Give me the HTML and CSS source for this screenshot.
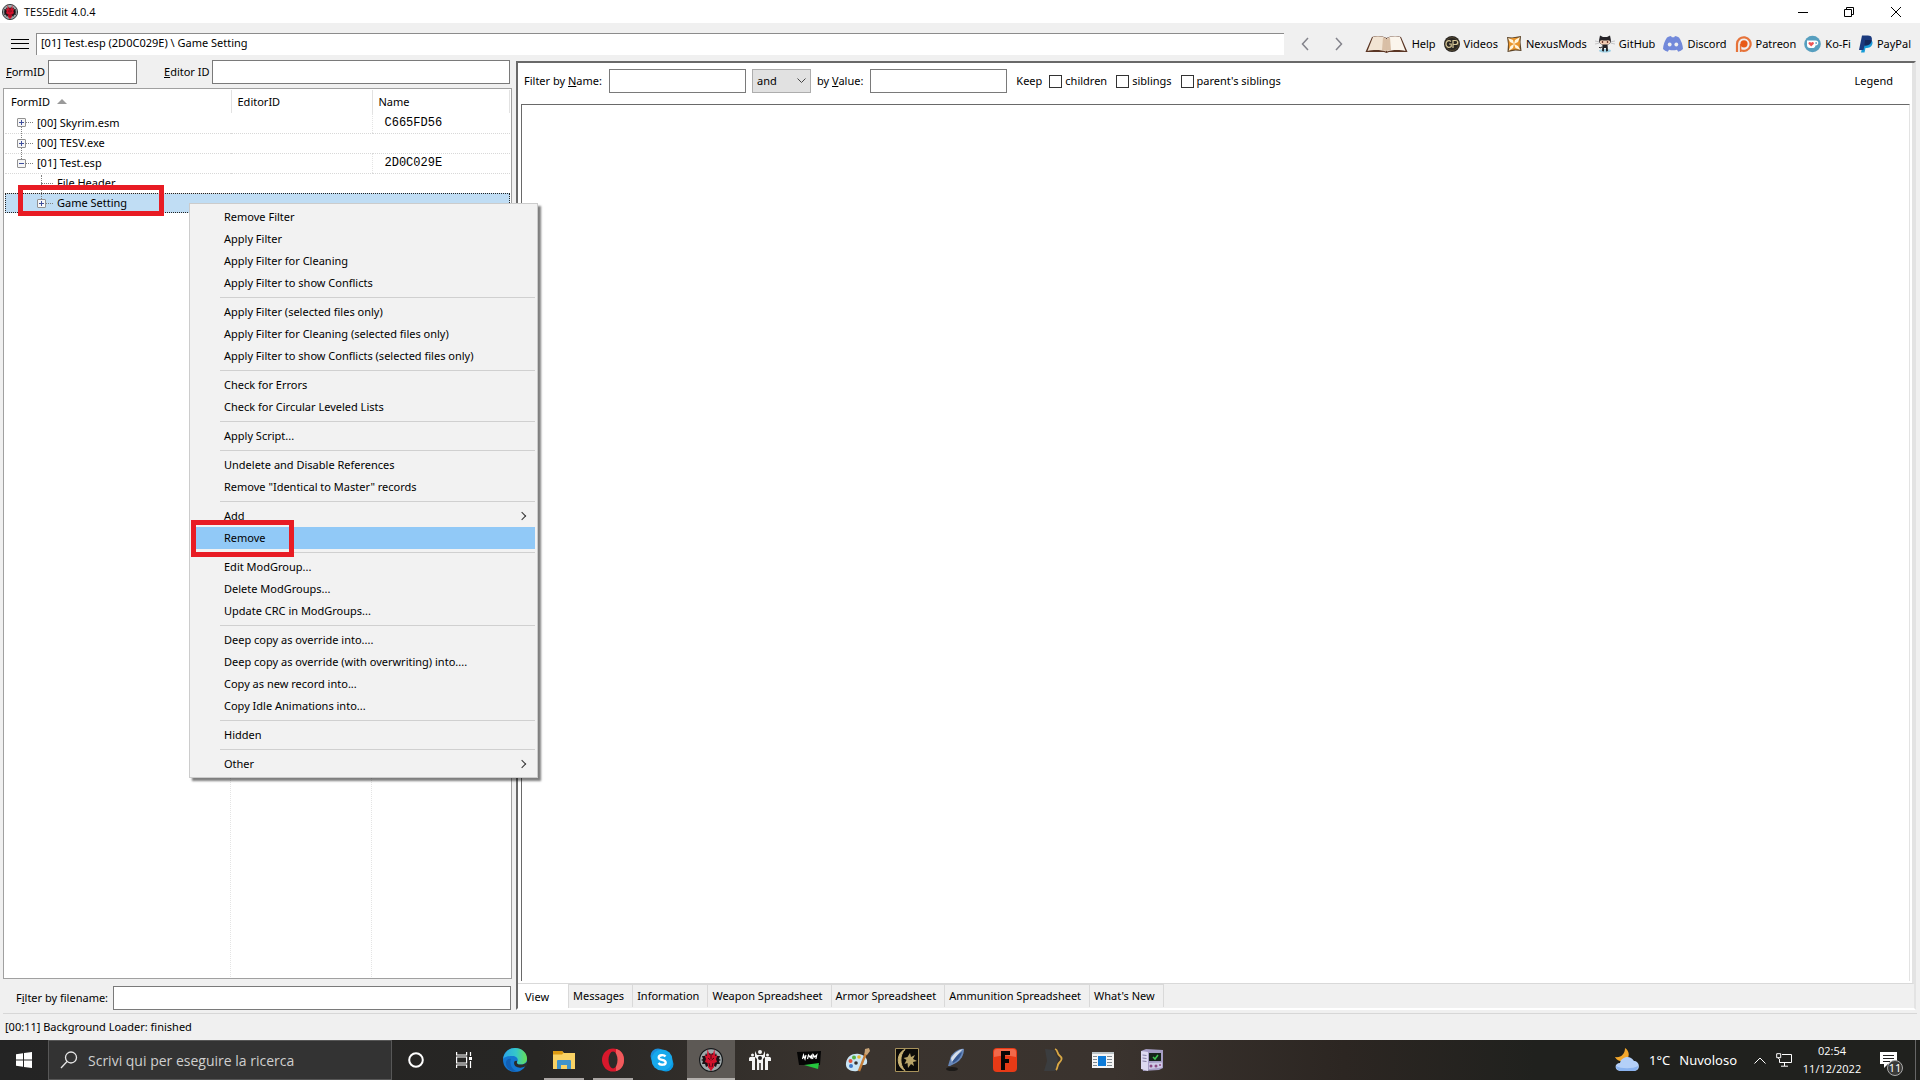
FILE: index.html
```
<!DOCTYPE html>
<html lang="it">
<head>
<meta charset="utf-8">
<title>TES5Edit 4.0.4</title>
<link rel="stylesheet" href="styles.css">
</head>
<body>
<svg class="defs" aria-hidden="true">
  <symbol id="daedra" viewBox="0 0 24 24">
    <circle cx="12" cy="12" r="11.4" fill="#9fa9ab" stroke="#15181a" stroke-width="1.2"/>
    <path d="M7 5l1 2 2-2 2 1 2-1 2 2 1-2 1 3 3 0-1 3 2 1-2 1 1 3-3 0-1 3-2-1-1 2h-4l-1-2-2 1-1-3-3 0 1-3-2-1 2-1-1-3 3 0z" fill="#1b1216"/>
    <path d="M8.500 1l2 6 1.500-1.500L13.500 7l2-6 .5 7 2.500-1-1.500 4 1 3-2.500 1-.5 4-3 4-3-4-.5-4-2.500-1 1-3-1.500-4 2.500 1z" fill="#d3122c"/>
    <path d="M9 10l2.400 2M15 10l-2.400 2M10 15l1 4M14 15l-1 4M12 6v5" stroke="#4c0713" stroke-width="1"/>
  </symbol>
</svg>

<header class="titlebar">
  <svg class="app-icon"><use href="#daedra"/></svg>
  <h1>TES5Edit 4.0.4</h1>
  <div class="window-buttons">
    <button aria-label="Minimize"><svg width="12" height="12" viewBox="0 0 12 12"><path d="M1 6.500h10"/></svg></button>
    <button aria-label="Restore"><svg width="12" height="12" viewBox="0 0 12 12"><path d="M1.500 3.500h7v7h-7zM3.500 3.500v-2h7v7h-2"/></svg></button>
    <button aria-label="Close"><svg width="12" height="12" viewBox="0 0 12 12"><path d="M1 1l10 10M11 1L1 11"/></svg></button>
  </div>
</header>

<div class="toolbar">
  <button class="burger" aria-label="Menu"><svg width="18" height="12" viewBox="0 0 18 12"><path d="M0 1.500h18M0 5.500h18M0 10.500h18"/></svg></button>
  <input class="address" aria-label="Path" value="[01] Test.esp (2D0C029E) \ Game Setting" readonly>
  <div class="history">
    <button aria-label="Back"><svg width="8" height="14" viewBox="0 0 8 14"><path d="M7 1L1.500 7 7 13"/></svg></button>
    <button aria-label="Forward"><svg width="8" height="14" viewBox="0 0 8 14"><path d="M1 1l5.500 6L1 13"/></svg></button>
  </div>
  <nav class="links">
    <a href="#help"><svg width="43" height="18" viewBox="0 0 43 18"><path d="M7 2C12 0 18 1 21.500 3 25 1 31 0 36 2l6.500 15H24l-2.500 1-2.500-1H.5z" fill="#5a3524"/><path d="M8 2c5-1.500 10-.5 13 1.500V16.500c-5-2-13-2-18.500-.5z" fill="#f2e4d3"/><path d="M35 2c-5-1.500-10-.5-13 1.500V16.500c5-2 13-2 18.500-.5z" fill="#fbf5ec"/><path d="M18 2.500l3.500 1.500v12l-4.500-1zM25 2.500L21.500 4v12l4.500-1z" fill="#d9bfa6"/></svg>Help</a>
    <a href="#videos"><svg width="16" height="18" viewBox="0 0 16 18"><circle cx="8" cy="9" r="8" fill="#2a2621"/><circle cx="8" cy="9" r="6.500" fill="none" stroke="#6a5a3c" stroke-width=".6"/><path d="M7 6.500C5 4.500 2 6 2 9s3 4.500 5.200 2.500V9H5M9 13V5.500h2.500c3 0 3 4 0 4H9" fill="none" stroke="#d8c898" stroke-width="1.200"/></svg>Videos</a>
    <a href="#nexus"><svg width="16" height="18" viewBox="0 0 16 18"><path d="M1 2l5 .5L15 1l-.5 6 1 9-6-.5-8 1.500L2 9z" fill="#5c4326"/><path d="M2.500 3.500L8 3l5.500-.5.5 6-.5 6-5.500 0-5 1z" fill="#e9952c"/><path d="M2 3l5 2 1 4L4 7zM14 2l-2 5-4 2 1-4zM14.500 15l-5-2L8 9l4 2zM2.500 16l2-5L8 9l-1 4z" fill="#fff6df"/></svg>NexusMods</a>
    <a href="#github"><svg width="20" height="18" viewBox="0 0 20 18"><ellipse cx="10" cy="15.800" rx="6" ry="1.800" fill="#9fd0e4"/><path d="M5 .5l3 1.500h4L15 .5l.8 4c.8 4-2 5.500-5.800 5.500S3.400 8.500 4.200 4.500zM7.500 9h5l.5 7-2 .5V13H9v3.500l-2-.5z" fill="#252327"/><path d="M5 6c1-1.500 3-.6 5-.6s4-.9 5 .6c.8 3-2 3.500-5 3.500S4.200 9 5 6z" fill="#f2cdb4"/><path d="M7.500 6v2M12.500 6v2" stroke="#6d3b30" stroke-width="1.300"/><path d="M0 6l4 .8M0 9l4-.8M20 6l-4 .8M20 9l-4-.8" stroke="#a9a9ac" stroke-width=".6"/><path d="M7 12l-2 1-1-1" fill="none" stroke="#252327"/></svg>GitHub</a>
    <a href="#discord"><svg width="20" height="18" viewBox="0 0 20 18"><path d="M4 2.500Q6 1.300 8 1l.8 1.300h2.400L12 1q2 .3 4 1.500 3.500 5 4 11.500-2 2-4.800 2.700l-1.200-2q-4 1-8 0l-1.200 2Q2 16 0 14 .5 7.500 4 2.500z" fill="#7289da"/><ellipse cx="6.700" cy="9.500" rx="1.900" ry="2.100" fill="#f0f0f0"/><ellipse cx="13.300" cy="9.500" rx="1.900" ry="2.100" fill="#f0f0f0"/></svg>Discord</a>
    <a href="#patreon"><svg width="17" height="18" viewBox="0 0 17 18"><path d="M2 17V9a6.800 6.800 0 1 1 4 6.300" fill="none" stroke="#e6733a" stroke-width="2.200"/><path d="M5.600 17V9" stroke="#e6733a" stroke-width="1.500"/><circle cx="9" cy="8.800" r="3.600" fill="#e85b17"/></svg>Patreon</a>
    <a href="#kofi"><svg width="17" height="18" viewBox="0 0 17 18"><circle cx="8.500" cy="9" r="8.300" fill="#579fbf"/><path d="M3 5.500h8.500c4 0 3.500 5 0 5-.5 2-1.500 2.500-3 2.500H6c-2 0-3-1-3-3z" fill="#fff"/><path d="M11.500 7v2.200c2 0 2-2.200 0-2.200z" fill="#579fbf"/><path d="M7.200 11.500L4.700 9c-1-1.500 1.200-3 2.500-1.200C8.500 6 10.700 7.500 9.700 9z" fill="#ee5555"/></svg>Ko-Fi</a>
    <a href="#paypal"><svg width="14" height="18" viewBox="0 0 14 18"><path d="M5 5h7c3 1.500 1.500 8-4 8H6.500l-1 4.500H2z" fill="#179bd7"/><path d="M3 .5h6c4 0 4.500 3 3.500 6C11.500 10 9 10.500 5.500 10.500L4.500 15H0z" fill="#1b3a7e"/><path d="M6 5h6.500C12 9 9.500 10.500 5.500 10.500z" fill="#14285c"/></svg>PayPal</a>
  </nav>
</div>

<main class="workspace">
  <section class="browser">
    <div class="id-search">
      <label for="formid"><u>F</u>ormID</label>
      <input id="formid" class="box formid">
      <label for="editorid" class="second"><u>E</u>ditor ID</label>
      <input id="editorid" class="box grow">
    </div>
    <div class="tree">
      <table>
        <colgroup><col class="col-form"><col class="col-editor"><col></colgroup>
        <thead>
          <tr><th>FormID <span class="sort"></span></th><th>EditorID</th><th>Name</th></tr>
        </thead>
        <tbody>
          <tr><td><span class="node"><button class="toggle plus stem" aria-label="Expand"></button><i class="twig"></i>[00] Skyrim.esm</span></td><td></td><td class="crc">C665FD56</td></tr>
          <tr><td><span class="node"><button class="toggle plus stem" aria-label="Expand"></button><i class="twig"></i>[00] TESV.exe</span></td><td></td><td></td></tr>
          <tr><td><span class="node"><button class="toggle" aria-label="Collapse"></button><i class="twig"></i>[01] Test.esp</span></td><td></td><td class="crc">2D0C029E</td></tr>
          <tr><td><span class="node child leaf"><i class="twig stem"></i>File Header</span></td><td></td><td></td></tr>
          <tr class="selected"><td><span class="node child"><button class="toggle plus" aria-label="Expand"></button><i class="twig"></i>Game Setting</span></td><td></td><td></td></tr>
        </tbody>
      </table>
      <div class="tree-rest"><i></i><i></i></div>
    </div>
    <div class="file-filter">
      <label for="filename">F<u>i</u>lter by filename:</label>
      <input id="filename" class="box grow">
    </div>
  </section>

  <section class="details">
    <div class="page">
      <form class="filters">
        <label for="byname">Filter by <u>N</u>ame:</label>
        <input id="byname" class="box value">
        <span class="select-wrap"><select aria-label="Operator"><option>and</option></select><svg width="9" height="6" viewBox="0 0 9 6"><path d="M.5 .5l4 4 4-4"/></svg></span>
        <label for="byvalue">by <u>V</u>alue:</label>
        <input id="byvalue" class="box value">
        <span class="keep">Keep</span>
        <label class="check"><input type="checkbox">children</label>
        <label class="check"><input type="checkbox">siblings</label>
        <label class="check"><input type="checkbox">parent's siblings</label>
        <a class="legend" href="#legend">Legend</a>
      </form>
      <div class="record-view"></div>
    </div>
    <div class="tabs" role="tablist">
      <button role="tab" class="active">View</button>
      <button role="tab">Messages</button>
      <button role="tab">Information</button>
      <button role="tab">Weapon Spreadsheet</button>
      <button role="tab">Armor Spreadsheet</button>
      <button role="tab">Ammunition Spreadsheet</button>
      <button role="tab">What's New</button>
    </div>
  </section>
</main>

<div class="status">[00:11] Background Loader: finished</div>

<footer class="taskbar">
  <button class="start" aria-label="Start"><svg width="16" height="16" viewBox="0 0 16 16"><path d="M0 2.200L7 1.200V7.500H0zM8 1L16 0v7.500H8zM0 8.500h7v6.300l-7-1zM8 8.500h8V16l-8-1.100z" fill="#fff"/></svg></button>
  <label class="search">
    <svg width="18" height="18" viewBox="0 0 18 18"><circle cx="11" cy="6.500" r="5.500"/><path d="M7 10.500L1 17"/></svg>
    <input type="text" placeholder="Scrivi qui per eseguire la ricerca" aria-label="Cerca">
  </label>
  <button class="task" aria-label="Cortana"><svg width="16" height="18" viewBox="0 0 16 18"><circle cx="8" cy="9" r="6.800" fill="none" stroke="#fff" stroke-width="2"/></svg></button>
  <button class="task" aria-label="Task view"><svg width="16" height="16" viewBox="0 0 16 16" fill="none" stroke="#fff" stroke-width="1.200"><path d="M.6 0v3h10V0M.6 16v-3h10v3M.6 5h10v6H.6zM14.500 0v4M14.500 9v7"/><path d="M13 5h3v3h-3z" fill="#fff" stroke="none"/></svg></button>
  <div class="apps">
    <button class="task" aria-label="Edge"><svg width="24" height="24" viewBox="0 0 24 24"><defs><linearGradient id="eg" x1="0" x2="1"><stop offset="0" stop-color="#2ba5e8"/><stop offset=".55" stop-color="#35c7c9"/><stop offset="1" stop-color="#67e052"/></linearGradient></defs><circle cx="12" cy="12" r="12" fill="#1477d1"/><path d="M0 11C1 4 6 0 12 0c7 0 12 5 12 10.500 0 4-3 6-6.500 6-3 0-4-1.300-3.300-2.500 1.800-3-.7-6-4.700-6C5 8 1.500 9 0 11z" fill="url(#eg)"/><path d="M8 11c-2 5 1 11 7 12.500C9 25 2 20 3 14c.5-2 2.500-4 5-3z" fill="#1160b5"/><path d="M14 14c-.7 1.500.5 2.600 3.500 2.600 2.500 0 4.500-.8 6.500-2.600v4l-2 .5c-2 1-4 1.500-6 1-4-.5-5.500-3-4.700-6 1.500-1 3-.9 2.700.5z" fill="#2b2b2a"/></svg></button>
    <button class="task open" aria-label="File Explorer"><svg width="22" height="20" viewBox="0 0 22 20"><path d="M0 1h9l2 2h11v16H0z" fill="#f9d264"/><path d="M0 1h9l1.500 2L9 4.500H0z" fill="#dc9a12"/><path d="M4 19v-8q0-1 1-1h12q1 0 1 1v8h-4v-4H8v4z" fill="#3f93cc"/></svg></button>
    <button class="task open" aria-label="Opera"><svg width="22" height="24" viewBox="0 0 22 24"><ellipse cx="11" cy="12" rx="11" ry="11.500" fill="#d8182c"/><path d="M14 1c5 1 8 5.500 8 11s-3 10-8 11z" fill="#ef5a5c"/><ellipse cx="11" cy="12" rx="4.500" ry="8.500" fill="#2c2a28"/></svg></button>
    <button class="task" aria-label="Skype"><svg width="24" height="24" viewBox="0 0 24 24"><circle cx="8" cy="8" r="7.500" fill="#1b8fdb"/><circle cx="16" cy="16" r="7.500" fill="#0a9be6"/><circle cx="12" cy="12" r="10.500" fill="#17a9ec"/><path d="M15.500 8.500C14 6.500 8.700 6.800 8.700 9.500c0 3.200 7 1.700 7 4.900 0 3-5.500 3-7.200.6" fill="none" stroke="#fff" stroke-width="2.300"/></svg></button>
    <button class="task open current" aria-label="TES5Edit"><svg width="24" height="24"><use href="#daedra"/></svg></button>
    <button class="task" aria-label="Mod tool"><svg width="22" height="22" viewBox="0 0 22 22" fill="#f4f4f4"><circle cx="3.500" cy="6" r="1.500"/><circle cx="11" cy="3" r="2"/><circle cx="18.500" cy="6" r="1.500"/><path d="M1 8h5v13H3v-9H0V9zM6 2l2 4h6l2-4v6l-2 2v11h-2.200v-7h-1.600v7H8V10L6 8zM16 8h5l1 1v3h-3v9h-3z"/><circle cx="11" cy="9" r="2" fill="#222"/></svg></button>
    <button class="task" aria-label="Mod manager"><svg width="24" height="20" viewBox="0 0 24 20"><path d="M0 2l24-1-1 14H2z" fill="#050505"/><path d="M7 15l15-2-1 6z" fill="#25c53e"/><path d="M5.500 9l1-4 1.500 4 1-4M10.500 9l1-4 1.500 2 2-2-1 4M15.500 9l1-4 1.200 2 2-2-.8 4" fill="none" stroke="#fff" stroke-width="1.200"/></svg></button>
    <button class="task" aria-label="Paint"><svg width="26" height="24" viewBox="0 0 26 24"><path d="M1 15C2 8 8 5 14 6c6 1 9 5 8 9-1 3-4 1-6 3s0 4-4 5C6 24 0 21 1 15z" fill="#c9e5f5"/><circle cx="5.500" cy="13" r="2" fill="#e2553c"/><circle cx="9" cy="9.500" r="2" fill="#57b244"/><circle cx="14" cy="9" r="1.800" fill="#e7b733"/><circle cx="6" cy="18" r="2" fill="#3b78c8"/><circle cx="11" cy="15" r="1.800" fill="#35322e"/><path d="M21 5L14 23" stroke="#c57d37" stroke-width="2.400"/><path d="M19.500 6L20 1l4-1 1 3-3 4z" fill="#c9a477"/></svg></button>
    <button class="task" aria-label="Creation Kit"><svg width="24" height="24" viewBox="0 0 24 24"><path d="M.5 .5h23v23H.5z" fill="#0c0b08" stroke="#a8935c"/><path d="M10 1.500C1 5 1 19 10 22.500 4.500 17 4.500 7 10 1.500z" fill="#c9b375" stroke="#c9b375"/><path d="M15 5l1 4 4-2-2 4 4 2-4 1 1 4-3-2-3 4-.5-5-3 1 2-4-3-2 4-1z" fill="#b8a468"/></svg></button>
    <button class="task" aria-label="Editor"><svg width="20" height="24" viewBox="0 0 20 24"><ellipse cx="6" cy="21" rx="6" ry="2" fill="#1c1a18"/><path d="M2 18L5 8C9 3 14 0 18 1c0 6-3 11-8 14l-6 3z" fill="#6686b8"/><path d="M5 10c4-6 8-8 12-9-3 3-7 7-11 14z" fill="#d5deea"/><path d="M6 14C9 10 12 6 16 4c-1 5-5 9-9 11z" fill="#35568f"/></svg></button>
    <button class="task" aria-label="FOMOD"><svg width="24" height="24" viewBox="0 0 24 24"><rect width="24" height="24" rx="4" fill="#e83a16"/><path d="M1 4q0-3 3-3h16q3 0 3 3v5q-11-3-22 0z" fill="#f2694a"/><path d="M8 3h9v4h-5v4h4v4h-4v7H8z" fill="#0a0606"/></svg></button>
    <button class="task" aria-label="Archive"><svg width="20" height="24" viewBox="0 0 20 24"><path d="M1 1l9 1 4 9-3 12H0l3-10z" fill="#3b3d3f"/><path d="M11 1c3 1 2 4 4 6 4 3 3 5 0 8-2 2-1 5-3 7" fill="none" stroke="#d9a945" stroke-width="1.800"/></svg></button>
    <button class="task" aria-label="Reader"><svg width="22" height="16" viewBox="0 0 22 16"><path d="M0 0h22v16H0z" fill="#f5f5f5"/><path d="M0 0h22v2H0z" fill="#bcc4c8"/><path d="M6 4h8v10H6z" fill="#0d7bd8"/><path d="M1 4.500h4M1 7.500h4M1 10.500h4M1 13.500h4M15 4.500h5M15 7.500h5M15 10.500h5M15 13.500h5" stroke="#808a90"/></svg></button>
    <button class="task" aria-label="Monitor"><svg width="24" height="24" viewBox="0 0 24 24"><path d="M1 3l5-2 17 1v18l-4 2-16 1z" fill="#a59dc4"/><path d="M1 3l7 1v19l-7-2z" fill="#dddaf0"/><path d="M2.500 7l4 .5M2.500 10l4 .5M2.500 13l4 .5" stroke="#8680a5"/><path d="M9 5h12v8H9z" fill="#16231a"/><path d="M13 9l2 2 3-4" fill="none" stroke="#42c552" stroke-width="1.500"/><path d="M9 15l13-.5v5L9 21z" fill="#cfc9e6"/><circle cx="11" cy="18" r="1.500" fill="#8a4a83"/><circle cx="16" cy="18" r="1.500" fill="#8a4a83"/><circle cx="20" cy="17" r="1" fill="#8a4a83"/></svg></button>
  </div>
  <div class="tray">
    <button class="weather"><svg width="25" height="24" viewBox="0 0 25 24"><path d="M10 0c5 3 5 10 0 13-4 1-8 0-10-4 6 1 10-3 10-9z" fill="#f2a72c"/><path d="M6 23c-7 0-7-8-1-8 1-6 10-9 14-2 6 0 7 10 0 10z" fill="#b4d0f8"/><path d="M1 18c5 3 17 3 22 0 0 3-2 5-5 5H6c-2 0-5-2-5-5z" fill="#8ab3ef"/></svg><span>1°C</span><span>Nuvoloso</span></button>
    <button aria-label="Hidden icons"><svg width="12" height="7" viewBox="0 0 12 7"><path d="M.5 6.500L6 1l5.500 5.500"/></svg></button>
    <button aria-label="Network"><svg width="16" height="14" viewBox="0 0 16 14"><path d="M6 1.500h9.500v8H3.500V6M8.500 9.500v3.500M5 13.200h7M.7 .7h4v4h-4zM2.700 4.700V6"/></svg></button>
    <time><span>02:54</span><span>11/12/2022</span></time>
    <button class="notify" aria-label="Notifications"><svg width="17" height="16" viewBox="0 0 17 16"><path d="M0 0h17v12H8l-4 4v-4H0z" fill="#fff" stroke="none"/><path d="M3 3.500h11M3 6.500h11M3 9.500h7" stroke="#222"/></svg><span class="badge">11</span></button>
  </div>
</footer>

<div class="context-menu" role="menu">
  <button role="menuitem">Remove Filter</button>
  <button role="menuitem">Apply Filter</button>
  <button role="menuitem">Apply Filter for Cleaning</button>
  <button role="menuitem">Apply Filter to show Conflicts</button>
  <hr>
  <button role="menuitem">Apply Filter (selected files only)</button>
  <button role="menuitem">Apply Filter for Cleaning (selected files only)</button>
  <button role="menuitem">Apply Filter to show Conflicts (selected files only)</button>
  <hr>
  <button role="menuitem">Check for Errors</button>
  <button role="menuitem">Check for Circular Leveled Lists</button>
  <hr>
  <button role="menuitem">Apply Script...</button>
  <hr>
  <button role="menuitem">Undelete and Disable References</button>
  <button role="menuitem">Remove "Identical to Master" records</button>
  <hr>
  <button role="menuitem" class="sub">Add</button>
  <button role="menuitem" class="hot">Remove</button>
  <hr>
  <button role="menuitem">Edit ModGroup...</button>
  <button role="menuitem">Delete ModGroups...</button>
  <button role="menuitem">Update CRC in ModGroups...</button>
  <hr>
  <button role="menuitem">Deep copy as override into....</button>
  <button role="menuitem">Deep copy as override (with overwriting) into....</button>
  <button role="menuitem">Copy as new record into...</button>
  <button role="menuitem">Copy Idle Animations into...</button>
  <hr>
  <button role="menuitem">Hidden</button>
  <hr>
  <button role="menuitem" class="sub">Other</button>
</div>
<div class="mark mark-tree"></div>
<div class="mark mark-menu"></div>
</body>
</html>
```
FILE: styles.css
```
* { box-sizing: border-box; }

body {
  margin: 0;
  min-height: 100vh;
  display: flex;
  flex-direction: column;
  position: relative;
  background: #f0f0f0;
  color: #000;
  font: 11px/16px "Noto Sans", "Open Sans", sans-serif;
}

button, input, select { font: inherit; color: inherit; }
button { border: 0; padding: 0; background: none; }
a { color: inherit; text-decoration: none; }
svg { display: block; flex: none; }
label { white-space: nowrap; }
.defs { position: absolute; width: 0; height: 0; }

/* Title bar */
.titlebar {
  display: flex;
  align-items: center;
  gap: 6px;
  height: 23px;
  padding-left: 2px;
  background: #fff;
}
.app-icon { width: 16px; height: 16px; }
.titlebar h1 { margin: 0; font: 11px/16px "Open Sans", sans-serif; }
.window-buttons { margin-left: auto; display: flex; }
.window-buttons button {
  width: 46px;
  height: 22px;
  display: grid;
  place-items: center;
}
.window-buttons button:last-child { width: 48px; }
.window-buttons path { fill: none; stroke: #000; }

/* Toolbar */
.toolbar {
  display: flex;
  align-items: center;
  height: 37px;
  padding: 4px 9px 0 11px;
}
.burger { margin-right: 7px; }
.burger path { stroke: #000; stroke-width: 1; }
.address {
  flex: 1;
  min-width: 0;
  height: 22px;
  padding: 0 4px 4px;
  border: 0;
  border-top: 1px solid #8c8c8c;
  border-left: 1px solid #8c8c8c;
  background: #fff;
}
.history { display: flex; gap: 26px; padding: 0 22px 0 17px; }
.history path { fill: none; stroke: #83838b; stroke-width: 1.500; }
.links { display: flex; gap: 8px; }
.links a { display: flex; align-items: center; gap: 4px; }

/* Workspace */
.workspace { flex: 1; display: flex; padding: 0 4px 3px 3px; gap: 4px; }
.box {
  height: 24px;
  border: 1px solid #7a7a7a;
  background: #fff;
  padding: 0 4px;
  min-width: 0;
}
.grow { flex: 1; }

.browser { flex: none; width: 509px; display: flex; flex-direction: column; }
.id-search { display: flex; align-items: center; gap: 4px; padding: 0 2px 4px 3px; }
.id-search label { width: 38px; }
.id-search .second { width: 44px; margin-left: 23px; }
.formid { width: 89px; }

.tree {
  flex: 1;
  display: flex;
  flex-direction: column;
  border: 1px solid #a0a0a0;
  background: #fff;
  padding: 1px;
}
.tree table { width: 100%; table-layout: fixed; border-collapse: collapse; }
.col-form { width: 226px; }
.col-editor { width: 141px; }
.tree th {
  height: 23px;
  padding: 0 6px;
  text-align: left;
  font-weight: 400;
  border-right: 1px solid #e2e2e2;
}
.sort {
  display: inline-block;
  margin: 0 0 2px 4px;
  border: 5px solid transparent;
  border-top: 0;
  border-bottom-color: #9a9a9a;
}
.tree td {
  height: 20px;
  padding: 0 12px;
  border-bottom: 1px dotted #d8d8d8;
}
.tree .crc {
  border-left: 1px dotted #e4e4e4;
  font: 12px/16px "Liberation Mono", monospace;
}
.node { display: flex; align-items: center; white-space: nowrap; }
.child { padding-left: 20px; }
.leaf { padding-left: 24px; }
.leaf .twig { width: 12px; }
.toggle {
  flex: none;
  width: 9px;
  height: 9px;
  border: 1px solid #919191;
  border-radius: 1px;
  background: linear-gradient(#3f4f9c, #3f4f9c) center / 5px 1px no-repeat, #f6f6f6;
}
.toggle.plus {
  background:
    linear-gradient(#3f4f9c, #3f4f9c) center / 5px 1px no-repeat,
    linear-gradient(#3f4f9c, #3f4f9c) center / 1px 5px no-repeat,
    #f6f6f6;
}
.twig { width: 7px; margin-right: 4px; border-top: 1px dotted #808080; }
/* Dotted connector that drops from one branch to the next */
.stem { position: relative; }
.stem::after {
  content: "";
  position: absolute;
  left: 3px;
  top: 8px;
  height: 11px;
  border-left: 1px dotted #808080;
}
.twig.stem::after { left: 0; top: -9px; height: 24px; }
.selected { background: #c0ddf4; outline: 1px dotted #222; outline-offset: -1px; }
.tree .selected td { border-color: transparent; }
.tree-rest { flex: 1; display: flex; }
.tree-rest i { width: 226px; border-right: 1px dotted #e4e4e4; }
.tree-rest i + i { width: 141px; }

.file-filter { display: flex; align-items: center; gap: 4px; padding: 7px 1px 0 13px; }
.file-filter label { width: 93px; }

/* Details pane */
.details {
  flex: 1;
  min-width: 0;
  display: flex;
  flex-direction: column;
  margin-top: 1px;
  border: 2px solid #696969;
  border-right: 2px solid #e3e3e3;
  border-bottom: 2px solid #fff;
}
.page {
  flex: 1;
  display: flex;
  flex-direction: column;
  background: #fff;
  border-right: 2px solid #e3e3e3;
  border-bottom: 1px solid #d9d9d9;
  padding: 0 2px 2px 3px;
}
.filters { display: flex; align-items: center; height: 41px; padding: 0 17px 5px 3px; }
.filters label { flex: none; }
.value { width: 137px; margin: 0 6px 0 7px; }
.select-wrap { position: relative; margin-right: 6px; }
.select-wrap select {
  display: block;
  width: 59px;
  height: 24px;
  padding: 0 4px;
  border: 1px solid #adadad;
  border-radius: 0;
  background: #e1e1e1;
  appearance: none;
}
.select-wrap svg { position: absolute; right: 5px; top: 9px; }
.select-wrap path { fill: none; stroke: #444; }
.keep { margin: 0 7px 0 3px; }
.check { display: flex; align-items: center; gap: 3px; margin-right: 9px; }
.check input {
  appearance: none;
  width: 13px;
  height: 13px;
  margin: 0;
  border: 1px solid #333;
  background: #fff;
}
.legend { margin-left: auto; }
.record-view {
  flex: 1;
  border-top: 1px solid #696969;
  border-left: 1px solid #696969;
  border-right: 1px solid #e3e3e3;
}

.tabs { display: flex; height: 24px; }
.tabs button { padding: 0 8px 0 4px; height: 23px; border-right: 1px solid #d9d9d9; border-top: 1px solid #d9d9d9; }
.tabs .active { width: 51px; height: 24px; padding: 2px 0 0 7px; text-align: left; border-top: 0; background: #fff; }

.status {
  height: 27px;
  margin: 0 3px;
  padding: 5px 2px;
  border-top: 1px solid #d7d7d7;
}

/* Taskbar */
.taskbar {
  display: flex;
  height: 40px;
  color: #fff;
  background: linear-gradient(90deg, #242424, #272624 28%, #3a342f 44%, #3a332e 58%, #2c2622 70%, #20211e 80%);
}
.taskbar button { display: flex; align-items: center; justify-content: center; }
.start { width: 48px; }
.search {
  width: 344px;
  display: flex;
  align-items: center;
  gap: 10px;
  padding: 0 11px;
  border: 1px solid #575757;
  background: #333;
  font: 14px/20px "Open Sans", sans-serif;
}
.search svg { fill: none; stroke: #e6e6e6; stroke-width: 1.300; }
.search input { flex: 1; min-width: 0; padding: 2px 0 0; border: 0; background: none; outline: 0; }
.search input::placeholder { color: #cfcfcf; opacity: 1; }
.task { width: 48px; border: solid transparent; border-width: 2px 0; }
.apps { display: flex; gap: 1px; margin-left: 3px; }
.taskbar .open { background: linear-gradient(#aaa6a4, #aaa6a4) center bottom / 40px 2px no-repeat border-box; }
.taskbar .current { background: linear-gradient(#b4b1ae, #b4b1ae) center bottom / 48px 2px no-repeat border-box, #5d5955 border-box; }
.tray { margin-left: auto; display: flex; align-items: center; margin-right: 4px; padding-right: 18px; border-right: 1px solid #666; }
.tray svg { fill: none; stroke: #fff; }
.tray .weather { gap: 9px; margin-right: 17px; font-size: 13px; }
.tray .weather svg { stroke: none; }
.tray time { display: flex; flex-direction: column; align-items: center; width: 60px; margin: 0 18px 0 0; font-family: "Open Sans", sans-serif; line-height: 18px; }
.tray button + button { margin-right: 10px; }
.tray .notify { position: relative; margin: 0; }
.badge {
  position: absolute;
  left: 7px;
  top: 8px;
  width: 16px;
  height: 16px;
  border: 1px solid #aaa;
  border-radius: 50%;
  background: #3a3a38;
  line-height: 14px;
  text-align: center;
}

/* Context menu */
.context-menu {
  position: absolute;
  left: 189px;
  top: 203px;
  width: 349px;
  padding: 2px;
  border: 1px solid #ccc;
  background: #f2f2f2;
  box-shadow: 3px 3px 2px rgba(0, 0, 0, .5);
}
.context-menu button {
  display: flex;
  align-items: center;
  justify-content: space-between;
  width: 100%;
  height: 22px;
  padding: 0 10px 0 32px;
}
.context-menu hr { height: 1px; margin: 3px 0 3px 28px; border: 0; background: #d0d0d0; }
.sub::after {
  content: "";
  width: 5px;
  height: 5px;
  border: solid #333;
  border-width: 1px 1px 0 0;
  transform: rotate(45deg);
}
.context-menu .hot { background: #91c9f7; }

/* Red highlight frames */
.mark { position: absolute; border: 5px solid #e81c24; }
.mark-tree { left: 18px; top: 185px; width: 146px; height: 31px; }
.mark-menu { left: 191px; top: 520px; width: 103px; height: 37px; }
```
